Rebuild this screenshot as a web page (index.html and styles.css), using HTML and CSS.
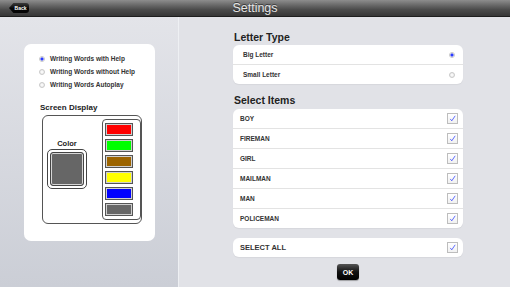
FILE: index.html
```html
<!DOCTYPE html>
<html lang="en">
<head>
    <meta charset="UTF-8">
    <title>Settings</title>
    <link rel="stylesheet" href="styles.css">
</head>
<body>
    <header class="topbar">
        <div class="bar-left"><button class="back">Back</button></div>
        <h1>Settings</h1>
        <div></div>
    </header>
    <div class="main">
        <aside class="side">
            <div class="side-card">
                <ul class="modes">
                    <li><span class="radio on"></span>Writing Words with Help</li>
                    <li><span class="radio"></span>Writing Words without Help</li>
                    <li><span class="radio"></span>Writing Words Autoplay</li>
                </ul>
                <h3>Screen Display</h3>
                <div class="display">
                    <div class="color-pick">
                        <div class="color-label">Color</div>
                        <div class="color-well"><div class="well-inner"></div></div>
                    </div>
                    <div class="swatches">
                        <span class="sw red"></span>
                        <span class="sw green"></span>
                        <span class="sw brown"></span>
                        <span class="sw yellow"></span>
                        <span class="sw blue"></span>
                        <span class="sw gray"></span>
                    </div>
                </div>
            </div>
        </aside>
        <section class="content">
            <h2>Letter Type</h2>
            <div class="group letters">
                <div class="row">Big Letter <span class="radio on"></span></div>
                <div class="row">Small Letter <span class="radio"></span></div>
            </div>
            <h2 class="second">Select Items</h2>
            <div class="group items">
                <div class="row">BOY <span class="check"><svg viewBox="0 0 10 10"><polyline points="2.5,5.5 4.2,7.6 8,2"/></svg></span></div>
                <div class="row">FIREMAN <span class="check"><svg viewBox="0 0 10 10"><polyline points="2.5,5.5 4.2,7.6 8,2"/></svg></span></div>
                <div class="row">GIRL <span class="check"><svg viewBox="0 0 10 10"><polyline points="2.5,5.5 4.2,7.6 8,2"/></svg></span></div>
                <div class="row">MAILMAN <span class="check"><svg viewBox="0 0 10 10"><polyline points="2.5,5.5 4.2,7.6 8,2"/></svg></span></div>
                <div class="row">MAN <span class="check"><svg viewBox="0 0 10 10"><polyline points="2.5,5.5 4.2,7.6 8,2"/></svg></span></div>
                <div class="row">POLICEMAN <span class="check"><svg viewBox="0 0 10 10"><polyline points="2.5,5.5 4.2,7.6 8,2"/></svg></span></div>
            </div>
            <div class="group items all">
                <div class="row">SELECT ALL <span class="check"><svg viewBox="0 0 10 10"><polyline points="2.5,5.5 4.2,7.6 8,2"/></svg></span></div>
            </div>
            <div class="actions"><button class="ok">OK</button></div>
        </section>
    </div>
</body>
</html>
```

FILE: styles.css
```css
* { margin: 0; padding: 0; box-sizing: border-box; }
body { font-family: 'Liberation Sans', Arial, sans-serif; width: 510px; height: 287px; overflow: hidden; background: #e1e2e7; }
button { font-family: inherit; border: none; cursor: pointer; }

/* top bar */
.topbar { height: 17px; display: grid; grid-template-columns: 1fr auto 1fr; align-items: center; background: linear-gradient(#8d8d8d, #6b6b6b 30%, #4b4b4b 60%, #363636); border-bottom: 1px solid #1e1e1e; }
.topbar h1 { font-size: 12.5px; font-weight: normal; color: #e6e6e6; text-shadow: 0 -1px 0 rgba(0, 0, 0, 0.5); line-height: 16px; }
.back { margin-left: 9px; width: 20px; height: 10px; display: block; background: linear-gradient(#3a3a3a, #050505 55%); color: #fff; font-size: 5px; font-weight: bold; padding-left: 3px; border-radius: 3px; clip-path: polygon(0 50%, 22% 0, 100% 0, 100% 100%, 22% 100%); }

.main { display: flex; height: 270px; }

/* left panel */
.side { width: 179px; background: linear-gradient(#e3e4e9, #cbced6); border-right: 1px solid #eef0f3; padding: 27px 0 0 24px; }
.side-card { width: 131px; height: 197px; background: #fff; border-radius: 7px; padding: 8px 0 0 15px; }
.modes { list-style: none; }
.modes li { display: flex; align-items: center; gap: 5px; height: 13px; font-size: 6.5px; font-weight: bold; color: #333; }
.radio { width: 6px; height: 6px; border-radius: 50%; border: 1px solid #c9c9c9; background: radial-gradient(#fff, #e4e4e4); flex: none; }
.radio.on { background: radial-gradient(circle, #2b3cff 0 1.4px, #fff 1.8px); }
.side-card h3 { font-size: 8px; line-height: 12px; color: #222; margin: 11px 0 1px 1px; }
.display { margin-left: 3px; width: 100px; height: 109px; border: 1px solid #555; border-radius: 6px; display: flex; justify-content: space-between; align-items: center; padding: 0 0 0 4px; }
.color-pick { display: flex; flex-direction: column; align-items: center; margin-bottom: 11px; }
.color-label { font-size: 7.5px; font-weight: bold; line-height: 10px; color: #222; }
.color-well { width: 40px; height: 40px; border: 1px solid #444; border-radius: 5px; padding: 2px; }
.well-inner { height: 100%; border: 1px solid #444; border-radius: 3px; background: #666; box-shadow: inset 0 0 0 1px #d6d6d6; }
.swatches { width: 39px; height: 101px; border: 1px solid #555; border-radius: 4px; padding: 3px 0 0 2px; display: flex; flex-direction: column; gap: 3px; }
.sw { width: 28px; height: 13px; border: 1px solid #555; box-shadow: inset 0 0 0 1px #cfcfcf; }
.red { background: #ff0000; }
.green { background: #00ff00; }
.brown { background: #9c6400; }
.yellow { background: #ffff00; }
.blue { background: #0000ff; }
.gray { background: #666; }

/* right panel */
.content { flex: 1; padding: 13px 0 0 54px; }
.content h2 { font-size: 10.5px; line-height: 14px; color: #222; margin: 0 0 1px 1px; }
.content h2.second { margin: 9px 0 2px 1px; }
.group { width: 230px; background: #fff; border-radius: 6px; box-shadow: 0 1px 1px rgba(0, 0, 0, 0.05); }
.row { height: 20px; display: flex; align-items: center; justify-content: space-between; padding: 0 8px 0 10px; border-top: 1px solid #e3e3e3; font-size: 6.5px; font-weight: bold; color: #333; }
.row:first-child { height: 19px; border-top: none; }
.items .row { padding: 0 5px 0 7px; }
.all { margin-top: 10px; }
.all .row { font-size: 7.5px; }
.check { width: 11px; height: 11px; border: 1px solid #bdbdbd; background: linear-gradient(#fff, #f1f1f1); display: flex; }
.check svg { width: 100%; height: 100%; }
.check polyline { fill: none; stroke: #3b4cff; stroke-width: 0.9; }
.actions { width: 230px; display: flex; justify-content: center; margin-top: 7px; }
.ok { width: 22px; height: 16px; border-radius: 3px; background: linear-gradient(#555, #111 50%, #000); color: #fff; font-size: 7px; font-weight: bold; box-shadow: 0 1px 1px rgba(0, 0, 0, 0.3); }
```
